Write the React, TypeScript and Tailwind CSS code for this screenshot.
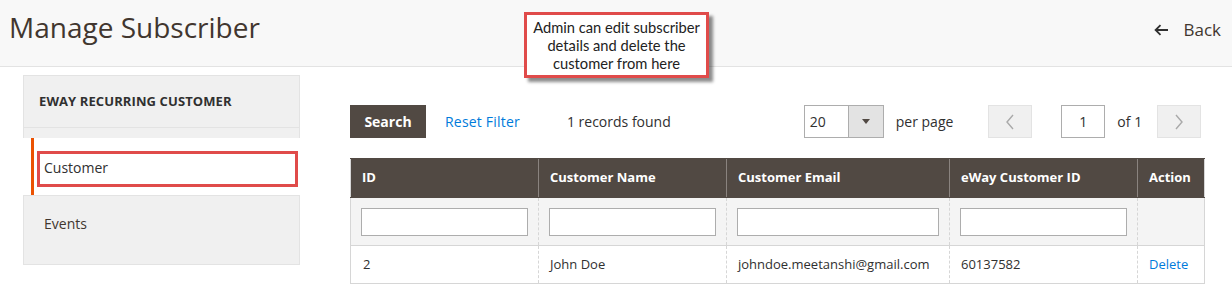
import React from 'react';

const font = { fontFamily: '"Open Sans", "Noto Sans", sans-serif' };

const columns = [
  { label: 'ID', width: 'w-[188px]', filter: true },
  { label: 'Customer Name', width: 'w-[188px]', filter: true },
  { label: 'Customer Email', width: 'w-[223px]', filter: true },
  { label: 'eWay Customer ID', width: 'w-[188px]', filter: true },
  { label: 'Action', width: 'w-[67px]', filter: false },
];

const rows = [
  { id: '2', name: 'John Doe', email: 'johndoe.meetanshi@gmail.com', ewayId: '60137582' },
];

const ChevronLeft = () => (
  <svg width="10" height="16" viewBox="0 0 10 16" fill="none">
    <path d="M8 1L2 8l6 7" stroke="#a9a9a9" strokeWidth="1.4" />
  </svg>
);

const ChevronRight = () => (
  <svg width="10" height="16" viewBox="0 0 10 16" fill="none">
    <path d="M2 1l6 7-6 7" stroke="#a9a9a9" strokeWidth="1.4" />
  </svg>
);

export default function App() {
  return (
    <div className="w-[1232px] h-[285px] bg-white text-[#303030] overflow-hidden" style={font}>
      {/* page header */}
      <div className="relative h-[67px] bg-[#f8f8f8] border-b border-[#e3e3e3] flex items-start justify-between">
        <h1 className="pl-[9px] pt-[8px] text-[28px] leading-[38px] text-[#41362f] font-normal">
          Manage Subscriber
        </h1>
        <button className="mt-[17px] mr-[11px] flex items-center gap-[14px] text-[17px] text-[#41362f]">
          <svg width="15" height="12" viewBox="0 0 15 12" fill="none">
            <path d="M14 6H2M6.5 1.2L1.6 6l4.9 4.8" stroke="#303030" strokeWidth="1.8" />
          </svg>
          Back
        </button>

        {/* callout */}
        <div
          className="absolute left-[524px] top-[12px] w-[185px] h-[66px] bg-white border-[3px] border-[#e04b4a] shadow-[4px_4px_3px_rgba(0,0,0,0.45)] flex items-center justify-center text-center text-[14.7px] leading-[18px] text-[#222]"
          style={{ fontFamily: 'Lato, "Noto Sans", sans-serif' }}
        >
          Admin can edit subscriber details and delete the customer from here
        </div>
      </div>

      <div className="flex pt-[8px]">
        {/* side nav */}
        <div className="ml-[23px] w-[277px] shrink-0">
          <div className="h-[53px] bg-[#f0f0f0] border border-[#e3e3e3] flex items-center pl-[15px] text-[13px] font-bold text-[#303030] tracking-[0.1px]">
            EWAY RECURRING CUSTOMER
          </div>
          <div className="h-[10px] bg-[#f0f0f0] border-x border-[#e3e3e3]" />
          <div className="ml-[8px] h-[57px] bg-white border-l-[3px] border-[#eb5202] pt-[13px] pl-[3px] pr-[2px]">
            <div className="w-full h-[36px] border-[3px] border-[#e04b4a] flex items-center pl-[4px] pb-[3px] text-[14px] text-[#303030]">
              Customer
            </div>
          </div>
          <div className="h-[70px] bg-[#f0f0f0] border border-[#e3e3e3] flex items-center pl-[20px] pb-[14px] text-[14px] text-[#41362f]">
            Events
          </div>
        </div>

        {/* grid */}
        <div className="ml-[50px] w-[854px] pt-[30px]">
          <div className="flex items-center h-[33px] text-[14px]">
            <button className="h-[33px] w-[76px] bg-[#514943] text-white font-bold text-[14px]">
              Search
            </button>
            <span className="ml-[19px] text-[#007bdb] tracking-[0.2px]">Reset Filter</span>
            <span className="ml-[47px] text-[#303030]">1 records found</span>

            <div className="ml-[133px] flex h-[33px] w-[80px] border border-[#adadad] bg-white">
              <span className="flex-1 pl-[5px] flex items-center">20</span>
              <span className="w-[35px] bg-[#e3e3e3] border-l border-[#adadad] flex items-center justify-center">
                <svg width="8" height="5" viewBox="0 0 8 5">
                  <path d="M0 0h8L4 5z" fill="#514943" />
                </svg>
              </span>
            </div>
            <span className="ml-[12px]">per page</span>

            <button className="ml-[35px] h-[33px] w-[44px] bg-[#f0f0f0] border border-[#e3e3e3] flex items-center justify-center">
              <ChevronLeft />
            </button>
            <div className="ml-[29px] h-[33px] w-[44px] border border-[#adadad] flex items-center justify-center">
              1
            </div>
            <span className="ml-[12px]">of 1</span>
            <button className="ml-[15px] h-[33px] w-[44px] bg-[#f0f0f0] border border-[#e3e3e3] flex items-center justify-center">
              <ChevronRight />
            </button>
          </div>

          <table className="mt-[20px] w-[854px] table-fixed border-collapse border border-[#d6d6d6] text-[13px]">
            <thead>
              <tr className="bg-[#514943] text-white h-[39px]">
                {columns.map((c) => (
                  <th
                    key={c.label}
                    className={`${c.width} text-left font-bold pl-[11px] border-l border-[#8a837f] first:border-l-0 border-y border-y-[#514943]`}
                  >
                    {c.label}
                  </th>
                ))}
              </tr>
            </thead>
            <tbody>
              <tr className="bg-[#f4f4f4] h-[48px] border-b border-[#d6d6d6]">
                {columns.map((c) => (
                  <td key={c.label} className="px-[10px] border-l border-dashed border-[#d6d6d6] first:border-l-0">
                    {c.filter && (
                      <div className="h-[28px] w-full bg-white border border-[#adadad]" />
                    )}
                  </td>
                ))}
              </tr>
              {rows.map((r) => (
                <tr key={r.id} className="h-[38px] bg-white text-[#303030]">
                  <td className="pl-[12px]">{r.id}</td>
                  <td className="pl-[11px] border-l border-dashed border-[#d6d6d6]">{r.name}</td>
                  <td className="pl-[11px] border-l border-dashed border-[#d6d6d6]">{r.email}</td>
                  <td className="pl-[11px] border-l border-dashed border-[#d6d6d6]">{r.ewayId}</td>
                  <td className="pl-[11px] border-l border-dashed border-[#d6d6d6] text-[#007bdb]">Delete</td>
                </tr>
              ))}
            </tbody>
          </table>
        </div>
      </div>
    </div>
  );
}
